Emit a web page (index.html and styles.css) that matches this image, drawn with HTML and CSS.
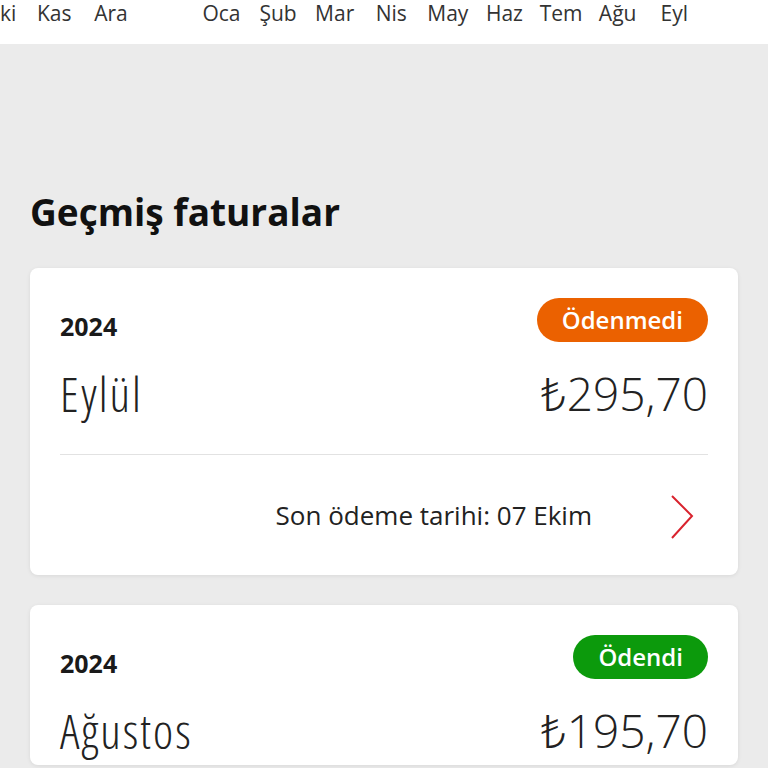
FILE: index.html
```html
<!DOCTYPE html>
<html lang="tr">
<head>
<meta charset="utf-8">
<link rel="stylesheet" href="styles.css">
</head>
<body>
<div class="months">
  <span class="m m-first">ki</span>
  <span class="m">Kas</span>
  <span class="m">Ara</span>
  <span class="m m-gap">Oca</span>
  <span class="m">Şub</span>
  <span class="m">Mar</span>
  <span class="m">Nis</span>
  <span class="m">May</span>
  <span class="m">Haz</span>
  <span class="m">Tem</span>
  <span class="m">Ağu</span>
  <span class="m">Eyl</span>
</div>
<main class="content">
  <h1 class="title">Geçmiş faturalar</h1>
  <section class="card">
    <div class="row-top">
      <span class="year">2024</span>
      <span class="badge badge-unpaid">Ödenmedi</span>
    </div>
    <div class="row-main">
      <span class="month">Eylül</span>
      <span class="price">₺295,70</span>
    </div>
    <div class="divider"></div>
    <div class="row-foot">
      <span class="due">Son ödeme tarihi: 07 Ekim</span>
      <svg class="chev" width="24" height="44" viewBox="0 0 24 44"><path d="M2 1 L22 21 L2 43" fill="none" stroke="#d9232e" stroke-width="2"/></svg>
    </div>
  </section>
  <section class="card">
    <div class="row-top">
      <span class="year">2024</span>
      <span class="badge badge-paid">Ödendi</span>
    </div>
    <div class="row-main">
      <span class="month">Ağustos</span>
      <span class="price">₺195,70</span>
    </div>
  </section>
</main>
</body>
</html>
```
FILE: styles.css
```css
html, body {
  margin: 0;
  padding: 0;
  background: #ebebeb;
  font-family: "Open Sans", "Noto Sans", sans-serif;
  color: #1a1a1a;
  overflow: hidden;
  height: 768px;
}
.months {
  background: #fff;
  height: 44px;
  display: flex;
  align-items: flex-start;
  font-size: 21px;
  line-height: 26px;
  color: #333;
  white-space: nowrap;
}
.m {
  width: 56.6px;
  flex: none;
  text-align: center;
}
.m-first {
  width: 20px;
  text-align: left;
  margin-right: 6px;
}
.m-gap { margin-left: 54px; }
.content {
  padding: 0 30px;
}
.title {
  margin: 0;
  padding-top: 146px;
  font-size: 37px;
  line-height: 44px;
  font-weight: 700;
  color: #111;
}
.card {
  background: #fff;
  border-radius: 8px;
  margin-top: 34px;
  padding: 30px 30px 0;
  box-shadow: 0 1px 4px rgba(0,0,0,0.08);
}
.card + .card { margin-top: 30px; }
.row-top {
  display: flex;
  justify-content: space-between;
  align-items: center;
  height: 44px;
}
.year {
  font-size: 25px;
  font-weight: 700;
  padding-top: 12px;
}
.badge {
  height: 44px;
  border-radius: 22px;
  color: #fff;
  font-weight: 600;
  font-size: 24px;
  line-height: 44px;
  padding: 0 25px;
}
.badge-unpaid { background: #eb6100; }
.badge-paid { background: #0c9a0c; }
.row-main {
  display: flex;
  justify-content: space-between;
  align-items: center;
  height: 70px;
  margin-top: 16px;
}
.month {
  font-size: 48px;
  font-weight: 300;
  color: #222;
  font-stretch: 75%;
  letter-spacing: 2px;
}
.price {
  font-size: 46px;
  font-weight: 300;
  color: #222;
}
.divider {
  height: 1px;
  background: #e2e2e2;
  margin-top: 26px;
}
.row-foot {
  display: flex;
  justify-content: flex-end;
  align-items: center;
  height: 120px;
}
.due {
  font-size: 26px;
  color: #222;
  margin-right: 78px;
}
.chev { margin-right: 14px; margin-top: 4px; }
```
